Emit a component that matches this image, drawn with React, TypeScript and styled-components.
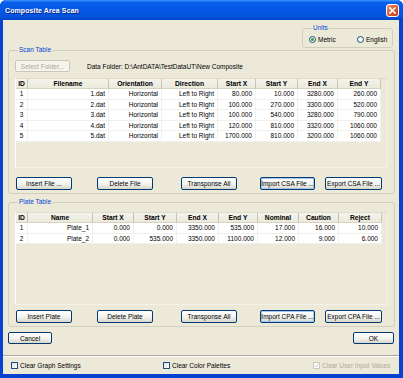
import React from 'react';
import styled, {createGlobalStyle} from 'styled-components';

const GlobalStyle = createGlobalStyle`
  html, body {
    margin: 0;
    padding: 0;
    background: #ffffff;
  }
  body {
    font-family: "Liberation Sans", Arial, sans-serif;
  }
`;

type Align = 'left' | 'center' | 'right';
type Col = { title: string; w: number; align?: Align };

const scanCols: Col[] = [
    {title: 'ID', w: 12, align: 'center'},
    {title: 'Filename', w: 81},
    {title: 'Orientation', w: 53},
    {title: 'Direction', w: 56},
    {title: 'Start X', w: 38},
    {title: 'Start Y', w: 42},
    {title: 'End X', w: 40},
    {title: 'End Y', w: 43},
];

const scanRows = [
    ['1', '1.dat', 'Horizontal', 'Left to Right', '80.000', '10.000', '3280.000', '260.000'],
    ['2', '2.dat', 'Horizontal', 'Left to Right', '100.000', '270.000', '3300.000', '520.000'],
    ['3', '3.dat', 'Horizontal', 'Left to Right', '100.000', '540.000', '3280.000', '790.000'],
    ['4', '4.dat', 'Horizontal', 'Left to Right', '120.000', '810.000', '3320.000', '1060.000'],
    ['5', '5.dat', 'Horizontal', 'Left to Right', '1700.000', '810.000', '3200.000', '1060.000'],
];

const plateCols: Col[] = [
    {title: 'ID', w: 12, align: 'center'},
    {title: 'Name', w: 65},
    {title: 'Start X', w: 41},
    {title: 'Start Y', w: 43},
    {title: 'End X', w: 42},
    {title: 'End Y', w: 39},
    {title: 'Nominal', w: 41},
    {title: 'Caution', w: 40},
    {title: 'Reject', w: 43},
];

const plateRows = [
    ['1', 'Plate_1', '0.000', '0.000', '3350.000', '535.000', '17.000', '16.000', '10.000'],
    ['2', 'Plate_2', '0.000', '535.000', '3350.000', '1100.000', '12.000', '9.000', '6.000'],
];

const Window = styled.div`
  width: 403px;
  height: 378px;
  display: flex;
  flex-direction: column;
  background: #0842D0;
  border-radius: 6px 6px 0 0;
  overflow: hidden;
`;

const TitleBar = styled.div`
  height: 20px;
  flex: none;
  display: flex;
  align-items: center;
  padding: 0 4px 0 5px;
  background: linear-gradient(180deg, #3D95FF 0%, #0A5FEA 12%, #0558E6 50%, #0453DC 85%, #0244C4 100%);
`;

const Title = styled.span`
  color: #ffffff;
  font-weight: bold;
  font-size: 7px;
  letter-spacing: 0.1px;
  text-shadow: 1px 1px 0 #0A1E80;
`;

const CloseButton = styled.div`
  margin-left: auto;
  width: 13px;
  height: 13px;
  box-sizing: border-box;
  border: 1px solid #ffffff;
  border-radius: 3px;
  background: linear-gradient(135deg, #F0A080 0%, #E0603A 40%, #C8401A 100%);
  display: flex;
  align-items: center;
  justify-content: center;
`;

const Body = styled.div`
  flex: 1;
  margin: 0 4px 4px 3px;
  padding: 0 4px 0 5px;
  background: #ECE9D8;
  display: flex;
  flex-direction: column;
  font-size: 6.5px;
  color: #000000;
`;

const Group = styled.fieldset<{ $mt: number }>`
  margin: ${p => p.$mt}px 0 0 0;
  padding: 6px 6px 3px 6px;
  border: 1px solid #D0D0BF;
  border-radius: 3px;
  min-width: 0;
  box-sizing: border-box;
`;

const UnitsGroup = styled(Group)`
  align-self: flex-end;
  width: 91px;
  height: 24px;
  margin-right: 2px;
  padding: 0 6px 1px 6px;
`;

const Legend = styled.legend`
  margin-left: 3px;
  padding: 0 1px;
  color: #0046D5;
  font-size: 6.5px;
  line-height: 8px;
`;

const RadioRow = styled.div`
  height: 14px;
  display: grid;
  grid-template-columns: 48px 1fr;
  align-items: center;
`;

const RadioLabel = styled.label`
  display: flex;
  align-items: center;
  gap: 2px;
`;

const RadioCircle = styled.span<{ $on?: boolean }>`
  width: 7px;
  height: 7px;
  box-sizing: border-box;
  border-radius: 50%;
  border: 1px solid #1C5180;
  background: radial-gradient(circle at 60% 60%, #ffffff 0%, #E6E6E0 100%);
  display: flex;
  align-items: center;
  justify-content: center;

  &::after {
    content: '';
    width: 3px;
    height: 3px;
    border-radius: 50%;
    background: ${p => (p.$on ? '#2DA32D' : 'transparent')};
  }
`;

const FolderRow = styled.div`
  height: 12px;
  display: flex;
  align-items: center;
  gap: 17px;
`;

const Button = styled.div<{ $w: number; $ml?: number; $hot?: boolean; $disabled?: boolean }>`
  width: ${p => p.$w}px;
  height: 12px;
  margin-left: ${p => p.$ml || 0}px;
  flex: none;
  box-sizing: border-box;
  border: 1px solid ${p => (p.$disabled ? '#C9C7BA' : '#003C74')};
  border-radius: 2px;
  background: ${p => (p.$disabled ? '#F5F4EA' : 'linear-gradient(180deg, #ffffff 0%, #F3F3EE 55%, #D9D5CA 100%)')};
  box-shadow: ${p => (p.$hot ? 'inset 0 0 0 1px #A8C4F0' : 'none')};
  color: ${p => (p.$disabled ? '#ACA899' : '#000000')};
  display: flex;
  align-items: center;
  justify-content: center;
  white-space: nowrap;
`;

const ButtonRow = styled.div<{ $mt: number }>`
  margin-top: ${p => p.$mt}px;
  height: 13px;
  display: flex;
  align-items: stretch;

  & > div {
    height: 13px;
  }
`;

const TableBox = styled.div<{ $mt: number; $h: number }>`
  margin-top: ${p => p.$mt}px;
  height: ${p => p.$h}px;
  box-sizing: border-box;
  border: 1px solid #F4F2E8;
  border-left-color: #ffffff;
  border-top-color: #DEDBCB;
  overflow: hidden;
`;

const GridRow = styled.div<{ $cols: string }>`
  display: grid;
  grid-template-columns: ${p => p.$cols};
  width: max-content;
`;

const HeadCell = styled.div`
  height: 10px;
  line-height: 10px;
  box-sizing: border-box;
  font-weight: bold;
  font-size: 6.7px;
  text-align: center;
  background: linear-gradient(180deg, #F4F3EC 0%, #EBEADB 100%);
  border-right: 1px solid #C7C5B2;
  border-bottom: 1px solid #D6D2C2;
  white-space: nowrap;
  overflow: hidden;
`;

const Cell = styled.div<{ $align: Align }>`
  height: 10.5px;
  line-height: 10.5px;
  box-sizing: border-box;
  padding: 0 3px;
  background: #ffffff;
  text-align: ${p => p.$align};
  border-right: 1px solid #F0F0EE;
  border-bottom: 1px solid #F0F0EE;
  white-space: nowrap;
  overflow: hidden;
`;

const BottomRow = styled.div`
  margin-top: 5px;
  display: flex;
  justify-content: space-between;
  padding-right: 1px;
`;

const Separator = styled.div`
  margin: 11px -4px 0 -5px;
  height: 0;
  border-top: 1px solid #ACA899;
  border-bottom: 1px solid #ffffff;
`;

const CheckRow = styled.div`
  margin-top: 3px;
  height: 10px;
  padding-left: 3px;
  display: grid;
  grid-template-columns: 152px 150px 1fr;
  align-items: center;
`;

const CheckLabel = styled.label<{ $disabled?: boolean }>`
  display: flex;
  align-items: center;
  gap: 2px;
  color: ${p => (p.$disabled ? '#ACA899' : '#000000')};
`;

const CheckBox = styled.span<{ $disabled?: boolean }>`
  width: 7px;
  height: 7px;
  box-sizing: border-box;
  border: 1px solid ${p => (p.$disabled ? '#CAC8BB' : '#1C5180')};
  background: ${p => (p.$disabled ? '#ffffff' : 'linear-gradient(135deg, #DCDCD7 0%, #ffffff 100%)')};
  display: flex;
  align-items: center;
  justify-content: center;
`;

const DataTable = ({cols, rows, mt, h}: { cols: Col[]; rows: string[][]; mt: number; h: number }) => {
    const template = cols.map(c => `${c.w}px`).join(' ');
    return (
        <TableBox $mt={mt} $h={h}>
            <GridRow $cols={template}>
                {cols.map(c => <HeadCell key={c.title}>{c.title}</HeadCell>)}
            </GridRow>
            {rows.map(r => (
                <GridRow $cols={template} key={r[0]}>
                    {r.map((v, i) => (
                        <Cell key={i} $align={cols[i].align || 'right'}>{v}</Cell>
                    ))}
                </GridRow>
            ))}
        </TableBox>
    );
};

const Check = ({label, checked, disabled}: { label: string; checked?: boolean; disabled?: boolean }) => (
    <CheckLabel $disabled={disabled}>
        <CheckBox $disabled={disabled}>
            {checked && (
                <svg width="5" height="5" viewBox="0 0 5 5">
                    <path d="M0.5 2.5 L2 4 L4.5 1" fill="none" stroke={disabled ? '#CAC8BB' : '#21A121'} strokeWidth="1"/>
                </svg>
            )}
        </CheckBox>
        {label}
    </CheckLabel>
);

const App = () => (
    <>
        <GlobalStyle/>
        <Window>
            <TitleBar>
                <Title>Composite Area Scan</Title>
                <CloseButton>
                    <svg width="7" height="7" viewBox="0 0 7 7">
                        <path d="M1 1 L6 6 M6 1 L1 6" stroke="#ffffff" strokeWidth="1.6" strokeLinecap="square"/>
                    </svg>
                </CloseButton>
            </TitleBar>
            <Body>
                <UnitsGroup $mt={4}>
                    <Legend>Units</Legend>
                    <RadioRow>
                        <RadioLabel><RadioCircle $on/>Metric</RadioLabel>
                        <RadioLabel><RadioCircle/>English</RadioLabel>
                    </RadioRow>
                </UnitsGroup>

                <Group $mt={-2}>
                    <Legend>Scan Table</Legend>
                    <FolderRow>
                        <Button $w={55} $disabled>Select Folder...</Button>
                        <span>Data Folder: D:\AntDATA\TestDataUT\New Composite</span>
                    </FolderRow>
                    <DataTable cols={scanCols} rows={scanRows} mt={6} h={90}/>
                    <ButtonRow $mt={9}>
                        <Button $w={56} $ml={1}>Insert File ...</Button>
                        <Button $w={56} $ml={25}>Delete File</Button>
                        <Button $w={56} $ml={28}>Transponse All</Button>
                        <Button $w={55} $ml={23} $hot>Import CSA File ...</Button>
                        <Button $w={57} $ml={10}>Export CSA File ...</Button>
                    </ButtonRow>
                </Group>

                <Group $mt={4}>
                    <Legend>Plate Table</Legend>
                    <DataTable cols={plateCols} rows={plateRows} mt={0} h={93}/>
                    <ButtonRow $mt={5}>
                        <Button $w={56} $ml={1}>Insert Plate</Button>
                        <Button $w={56} $ml={25}>Delete Plate</Button>
                        <Button $w={56} $ml={28}>Transponse All</Button>
                        <Button $w={55} $ml={23} $hot>Import CPA File ...</Button>
                        <Button $w={57} $ml={10}>Export CPA File ...</Button>
                    </ButtonRow>
                </Group>

                <BottomRow>
                    <Button $w={44}>Cancel</Button>
                    <Button $w={41}>OK</Button>
                </BottomRow>

                <Separator/>

                <CheckRow>
                    <Check label="Clear Graph Settings"/>
                    <Check label="Clear Color Palettes"/>
                    <Check label="Clear User Input Values" checked disabled/>
                </CheckRow>
            </Body>
        </Window>
    </>
);

export default App;
